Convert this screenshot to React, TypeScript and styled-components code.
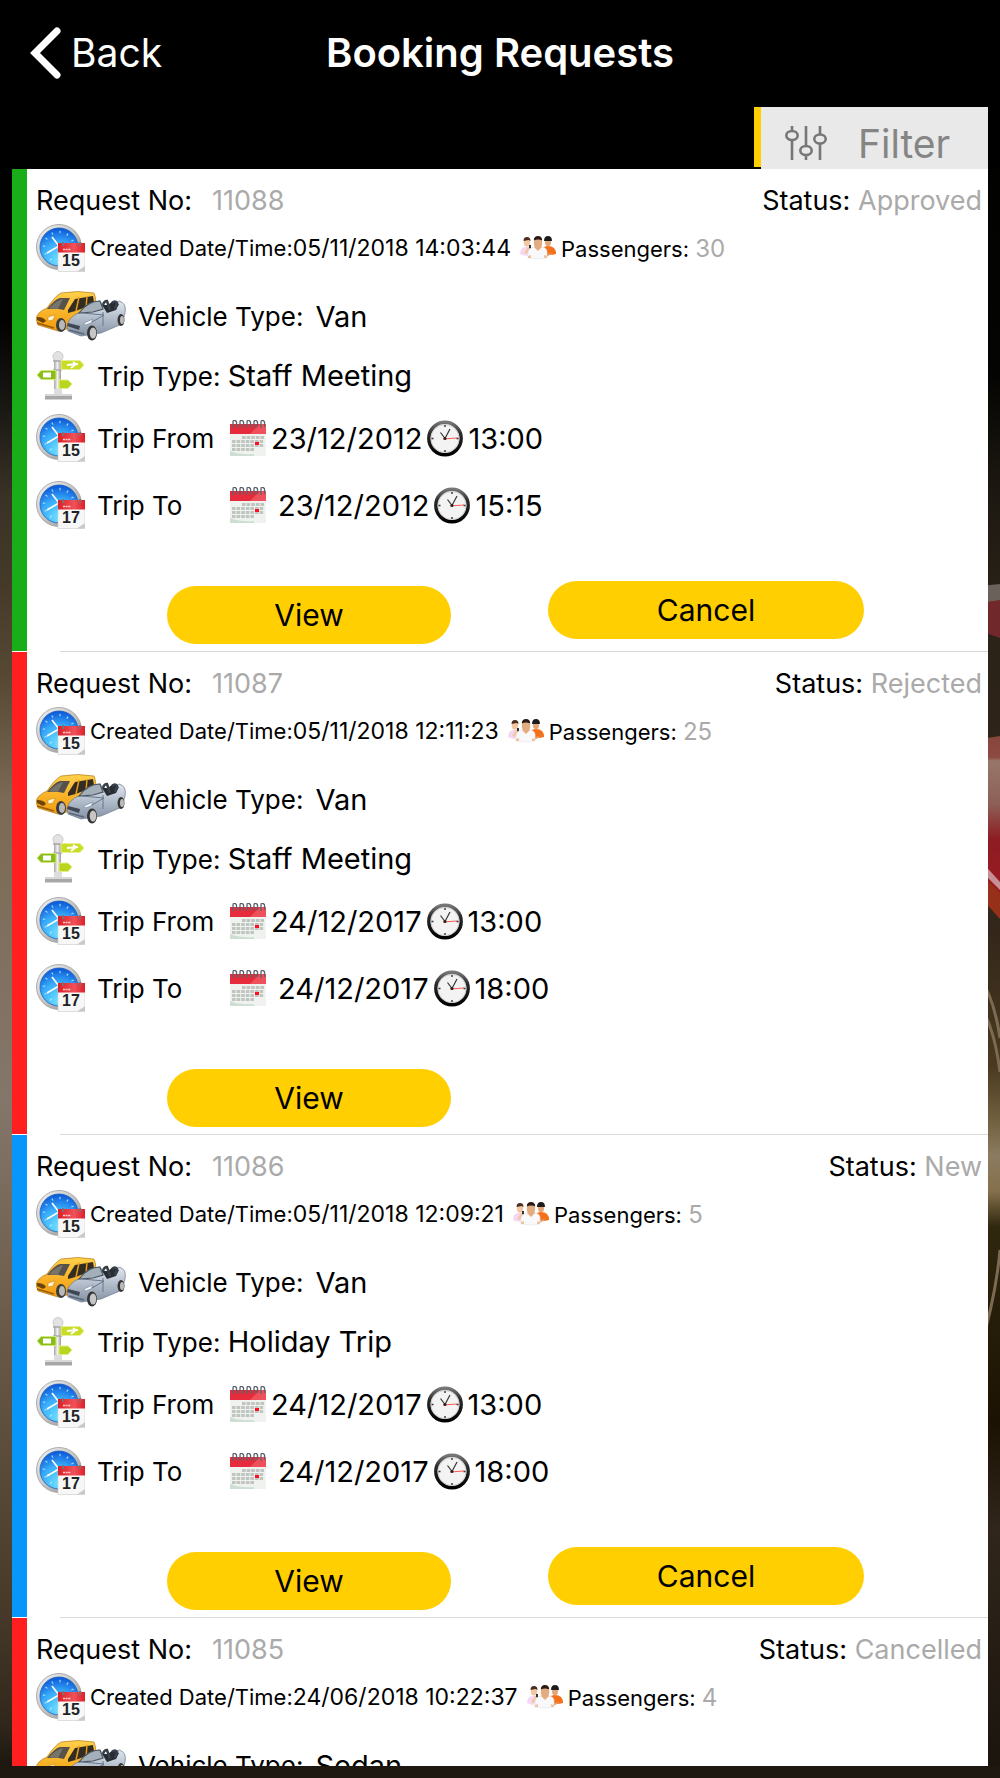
import React from "react";
import styled, { createGlobalStyle } from "styled-components";

const GlobalStyle = createGlobalStyle`
  *, *::before, *::after { box-sizing: border-box; }
  html, body { margin: 0; background: #000; }
  body { font-family: Inter, "Noto Sans", sans-serif; color: #000; }
  button { font: inherit; border: 0; cursor: pointer; }
`;

const Screen = styled.div`
  height: 100vh;
  min-width: 760px;
  display: flex;
  flex-direction: column;
  padding-bottom: 12px;
  position: relative;
  isolation: isolate;
  overflow: hidden;
`;

const Backdrop = styled.svg`
  position: absolute;
  inset: 0;
  width: 100%;
  height: 100%;
  z-index: -1;
`;

const NavBar = styled.header`
  display: grid;
  grid-template-columns: 1fr auto 1fr;
  align-items: center;
  height: 107px;
  flex: none;
  padding: 0 30px 2px;
  color: #fff;
  background: #000;
`;

const BackLink = styled.a`
  display: flex;
  align-items: center;
  gap: 9px;
  color: inherit;
  text-decoration: none;
  font-size: 39px;
`;

const Title = styled.h1`
  margin: 0;
  font-size: 40px;
  font-weight: 600;
`;

const FilterBar = styled.div`
  display: flex;
  justify-content: flex-end;
  flex: none;
  height: 62px;
  padding: 0 12px;
  background: #000;
`;

const FilterAccent = styled.span`
  width: 7px;
  height: 60px;
  background: #ffcf02;
`;

const FilterButton = styled.button`
  display: flex;
  align-items: center;
  gap: 31px;
  width: 227px;
  padding: 10px 24px 0;
  background: #e9e9e9;
  color: #858585;
  && { font-size: 39px; }
`;

const List = styled.main`
  flex: 1;
  min-height: 0;
  margin: 0 12px;
  overflow: hidden auto;
  scrollbar-width: none;
  background: #fff;
`;

const Card = styled.article<{ $accent: string }>`
  display: flex;
  flex-direction: column;
  min-height: 483px;
  padding: 12px 0 0 24px;
  background: linear-gradient(${(p) => p.$accent}, ${(p) => p.$accent}) 0 0 / 15px calc(100% - 1px) no-repeat #fff;
`;

const Row = styled.div<{ $height: number; $gap?: number }>`
  display: flex;
  align-items: center;
  flex: none;
  height: ${(p) => p.$height}px;
  gap: ${(p) => p.$gap ?? 0}px;
  font-size: 26px;
  white-space: nowrap;
`;

const HeadRow = styled(Row)`
  justify-content: space-between;
  padding-right: 6px;
  font-size: 27px;
`;

const VehicleRow = styled(Row)`
  margin-top: 10px;
`;

const Created = styled(Row)`
  font-size: 22px;
`;

const Stamp = styled.span`
  margin-right: 4px;
  font-size: 23px;
`;

const Muted = styled.span<{ $indent?: number; $size?: number }>`
  margin-left: ${(p) => p.$indent ?? 0}px;
  color: #aaa;
  font-size: ${(p) => p.$size ?? 27}px;
`;

const Value = styled.span<{ $indent?: number }>`
  margin-left: ${(p) => p.$indent ?? 0}px;
  font-size: 29px;
`;

const Time = styled.span`
  display: flex;
  align-items: center;
  gap: 5px;
  margin-left: 5px;
  font-size: 29px;
`;

const TripLabel = styled.span`
  width: 133px;
  margin-left: 12px;
`;

const Actions = styled.div`
  display: grid;
  grid-template-columns: 284fr 316fr;
  column-gap: 97px;
  padding: 42px 124px 7px 131px;
  align-items: start;
  height: 112px;
`;

const Pill = styled.button<{ $drop?: number }>`
  height: 58px;
  margin-top: ${(p) => p.$drop ?? 0}px;
  padding: 0;
  border-radius: 29px;
  background: #ffcf02;
  color: #000;
  && { font-size: 30px; }
`;

const Divider = styled.hr`
  width: calc(100% - 24px);
  height: 1px;
  margin: auto 0 0 24px;
  border: 0;
  background: #d9d9d9;
`;

const Icon = styled.svg`
  display: block;
  flex: none;
`;

const HiddenDefs = styled.svg`
  position: absolute;
  width: 0;
  height: 0;
`;

function Defs() {
  return (
    <HiddenDefs aria-hidden="true">
      <defs>
        <radialGradient id="blue" cx="50%" cy="85%" r="85%">
          <stop offset="0" stopColor="#6fe2ff" />
          <stop offset=".55" stopColor="#38acfa" />
          <stop offset="1" stopColor="#0a55d8" />
        </radialGradient>
        <linearGradient id="steel" x1="0" y1="0" x2="1" y2="1">
          <stop offset="0" stopColor="#f6f6f6" />
          <stop offset=".5" stopColor="#c4c4c4" />
          <stop offset="1" stopColor="#8b8b8b" />
        </linearGradient>
        <linearGradient id="post" x1="0" y1="0" x2="1" y2="0">
          <stop offset="0" stopColor="#a7a7a7" />
          <stop offset=".5" stopColor="#f2f2f2" />
          <stop offset="1" stopColor="#9a9a9a" />
        </linearGradient>
        <linearGradient id="red" x1="0" y1="0" x2="1" y2="0">
          <stop offset="0" stopColor="#d92027" />
          <stop offset=".6" stopColor="#f0525a" />
          <stop offset="1" stopColor="#de1f2a" />
        </linearGradient>
        <linearGradient id="taxi" x1="0" y1="0" x2="0" y2="1">
          <stop offset="0" stopColor="#ffd04a" />
          <stop offset="1" stopColor="#f29a0c" />
        </linearGradient>
        <linearGradient id="silver" x1="0" y1="0" x2="0" y2="1">
          <stop offset="0" stopColor="#dfe6ef" />
          <stop offset="1" stopColor="#8492a5" />
        </linearGradient>
        <linearGradient id="rim" x1="0" y1="0" x2="0" y2="1">
          <stop offset="0" stopColor="#777" />
          <stop offset=".35" stopColor="#2a2a2a" />
          <stop offset="1" stopColor="#000" />
        </linearGradient>
      </defs>
    </HiddenDefs>
  );
}

function ClockDateIcon({ day }: { day: number }) {
  return (
    <Icon width="49" height="48" viewBox="0 0 49 48" aria-hidden="true">
      <circle cx="23" cy="23" r="22.5" fill="url(#steel)" stroke="#999" strokeWidth=".8" />
      <circle cx="23" cy="23" r="19" fill="url(#blue)" stroke="#1c5fb8" strokeWidth=".8" />
      <circle cx="23" cy="23" r="15" fill="none" stroke="#c6f0ff" strokeWidth="2.4" strokeDasharray="1.2 6.65" opacity=".8" />
      <path d="M16 13 L23 22 L11 29" fill="none" stroke="#fff" strokeWidth="1.6" />
      <rect x="22" y="20" width="27" height="27.5" fill="#f7f7f7" stroke="#ccc" strokeWidth=".6" />
      <path d="M22 19h27v9.500H22z" fill="url(#red)" />
      <path d="M27 25.500h8" stroke="#ffc9c9" strokeWidth="1.500" strokeDasharray="2 .6" />
      <path d="M27 22v-4M44 22v-4" stroke="#777" strokeWidth="1.800" />
      <path d="M49 42l-8 5.500h8z" fill="#c9c9c9" />
      <text x="35" y="42" textAnchor="middle" fontFamily="Liberation Sans, sans-serif" fontWeight="700" fontSize="16" fill="#222">{day}</text>
    </Icon>
  );
}

function PeopleIcon() {
  return (
    <Icon width="36" height="24" viewBox="0 0 36 24" aria-hidden="true">
      <path d="M0 18q0-6 5-7h4l3 3v5q-8 2-12-1z" fill="#f6d7f2" />
      <ellipse cx="7" cy="6.500" rx="3.200" ry="4.200" fill="#f2c7a2" />
      <path d="M3.500 5q0-4 3.500-4t3.500 4l-2-1-5 1z" fill="#4a2d20" />
      <path d="M4 17l4-6 2 1-3 6z" fill="#f2c7a2" />
      <path d="M9 9l2 0v4l-2-1z" fill="#333" />
      <path d="M22 17v-4q2-3 6-3 8 0 8 8-6 2-13 0z" fill="#f5701b" />
      <ellipse cx="28" cy="6.500" rx="3" ry="3.800" fill="#e3a678" />
      <path d="M24 5q0-5 4-5t4 5z" fill="#1d1d1d" />
      <path d="M24 19l7-2 1 1-6 3z" fill="#e59a66" />
      <path d="M8 22v-4q0-6 6-7h8q6 1 5 7v4q-8 2-19 0z" fill="#f9f9fc" stroke="#e3e3ea" strokeWidth=".6" />
      <path d="M14 11l4 4 4-4-2-2h-4z" fill="#e6ac80" />
      <ellipse cx="18" cy="7" rx="4.200" ry="5.500" fill="#e3ac80" />
      <path d="M13.800 4.500q0-4.500 4.200-4.500t4.200 4.500q-4-2-8.400 0z" fill="#2c1b15" />
      <path d="M8 20l3-1v3H8zM24 19l3 1v2h-3z" fill="#edc3a0" />
    </Icon>
  );
}

function CarsIcon() {
  return (
    <Icon width="90" height="50" viewBox="0 0 90 50" aria-hidden="true">
      <path d="M0 28q1-7 11-11Q19 5 25 2q17-3 33 0 3 6 1 20L40 36l-18 4L2 34z" fill="url(#taxi)" stroke="#a76c0e" strokeWidth=".6" />
      <path d="M11 18q8-10 13-11h10l-6 12q-8-2-17-1z" fill="#56524b" />
      <path d="M13 17q8-8 14-9l-5 10z" fill="#77746c" />
      <path d="M32 19l7-11 18-3 1 6q-9 7-26 11z" fill="#332c22" />
      <path d="M43 6l-3 14M51 5l-1 12" stroke="#e89b18" strokeWidth="1.500" />
      <path d="M1 26q7 0 9 4l-3 2-6-3z" fill="#6b4409" />
      <path d="M12 26l7-2-2 5-5 1z" fill="#fff4d1" stroke="#c98a19" strokeWidth=".6" />
      <path d="M1 32l17 5" stroke="#995d0b" strokeWidth="1.400" />
      <ellipse cx="25" cy="34" rx="5" ry="7" fill="#3c3c3c" /><ellipse cx="26" cy="34" rx="3" ry="5" fill="#b8b8b8" />
      <path d="M31 36q0-9 13-15 9-11 20-11l5 7 14-7q8 2 6 12l-3 11-21 9-20 3-13-5z" fill="url(#silver)" stroke="#6b7889" strokeWidth=".7" />
      <path d="M43 22q9-12 21-12l3 8-10 3z" fill="#a3afb9" stroke="#4c5661" strokeWidth="1.200" />
      <path d="M66 14l5 8 9-3 3-6-6-3-5 4z" fill="#272c33" />
      <path d="M67 14q1-4 4-4l3 9M76 12q3-3 5 0l-2 6" fill="none" stroke="#3a4048" strokeWidth="2.500" />
      <path d="M46 22l22 2-12 7M67 21v14" fill="none" stroke="#67778c" />
      <path d="M32 32l12 3-1 4-12-4z" fill="#3e4753" />
      <path d="M48 32l9-4-2 4-6 2z" fill="#f9fbff" stroke="#718196" strokeWidth=".6" />
      <path d="M33 39l15 4" stroke="#5a6777" strokeWidth="1.400" />
      <ellipse cx="56" cy="42" rx="5" ry="7.500" fill="#343434" /><ellipse cx="57" cy="42" rx="3.300" ry="5.500" fill="#c6c6c6" />
      <ellipse cx="85" cy="29" rx="3.500" ry="6" fill="#343434" /><ellipse cx="86" cy="29" rx="2" ry="4" fill="#bbb" />
    </Icon>
  );
}

function SignpostIcon() {
  return (
    <Icon width="49" height="49" viewBox="0 0 49 49" aria-hidden="true">
      <rect x="18" y="8" width="7" height="36" fill="url(#post)" />
      <circle cx="22" cy="5.500" r="5" fill="#e2e2e2" stroke="#bbb" strokeWidth=".7" />
      <path d="M17 10h10M17 19h9" stroke="#aaa" strokeWidth="1.500" />
      <path d="M25 9.500h19l4 4.500-4 4.500H25z" fill="#c9dd27" stroke="#e6ef96" />
      <path d="M31 14l11-1M35 17l5-4-3-2" fill="none" stroke="#fff" strokeWidth="1.800" />
      <path d="M20 19.500H5L1 24l4 4.500h15z" fill="#8bbd18" stroke="#d5e77c" />
      <rect x="7" y="21.500" width="8" height="5" fill="#fff" />
      <path d="M23 29h9l4 4-4 4.500h-9z" fill="#b9d51d" stroke="#e3ee8b" />
      <path d="M9 43h27v5.500H9z" fill="#a7a7a7" /><path d="M9 43h27v2H9z" fill="#d8d8d8" />
      <path d="M18 38h8v5h-8z" fill="#ddd" />
    </Icon>
  );
}

function CalendarIcon() {
  return (
    <Icon width="36" height="36" viewBox="0 0 36 36" aria-hidden="true">
      <rect x="0" y="5" width="36" height="31" fill="#eff2ef" />
      <path d="M0 4h36v10H0z" fill="#e62c3c" />
      <path d="M20 14L30 4h6v10z" fill="#f36b72" opacity=".6" />
      {[4, 11, 18, 25, 32].map((x) => (
        <path key={x} d={`M${x - 1} 8V2q0-2 2-1.500 2 .5 1.500 3V7`} fill="none" stroke="#59636b" strokeWidth="1.300" />
      ))}
      <path d="M12 17.500h22M2 21.500h32M2 25.500h32M2 29.500h22" stroke="#c0c5c0" strokeWidth="2.800" strokeDasharray="3.600 1" />
      <rect x="25" y="22" width="4" height="3" fill="#ff1020" />
      <path d="M0 31q10 4 24 3v2H0z" fill="#cddfd3" />
    </Icon>
  );
}

function ClockIcon() {
  return (
    <Icon width="36" height="37" viewBox="0 0 36 37" aria-hidden="true">
      <circle cx="18" cy="18.500" r="16.200" fill="#f3f3f3" stroke="url(#rim)" strokeWidth="3.400" />
      <circle cx="18" cy="18.500" r="14" fill="none" stroke="#bbb" strokeWidth=".6" />
      <path d="M18 5v2M18 30v2M4.500 18.500h2M29.500 18.500h2" stroke="#333" strokeWidth="1.400" />
      <path d="M13.500 12.500l4.500 6 5-9.500" fill="none" stroke="#333" strokeWidth="1.200" />
      <path d="M16 19l14-1" stroke="#ff5a50" strokeWidth="1" />
      <circle cx="18" cy="18.500" r="1.500" fill="#222" />
    </Icon>
  );
}

function FilterIcon() {
  return (
    <Icon width="42" height="34" viewBox="0 0 42 34" fill="none" stroke="#777" strokeWidth="2.600" aria-hidden="true">
      <path d="M7 0v5M7 14v20M21 0v20M21 29v5M35 0v8M35 18v16" />
      <ellipse cx="7" cy="9.500" rx="5.700" ry="4.500" />
      <ellipse cx="21" cy="24.500" rx="5.700" ry="4.500" />
      <ellipse cx="35" cy="13" rx="5.700" ry="4.500" />
    </Icon>
  );
}

function Scenery() {
  return (
    <Backdrop viewBox="0 0 1000 1778" preserveAspectRatio="none" aria-hidden="true">
      <defs>
        <linearGradient id="road" x1="0" y1="0" x2="0" y2="1">
          <stop offset="0" stopColor="#000" />
          <stop offset=".18" stopColor="#020201" />
          <stop offset=".23" stopColor="#1a1815" />
          <stop offset=".28" stopColor="#3a3226" />
          <stop offset=".33" stopColor="#453a2a" />
          <stop offset=".38" stopColor="#564834" />
          <stop offset=".45" stopColor="#7b6a55" />
          <stop offset=".62" stopColor="#84766a" />
          <stop offset=".75" stopColor="#695a48" />
          <stop offset=".9" stopColor="#493b2a" />
          <stop offset=".97" stopColor="#30271b" />
          <stop offset="1" stopColor="#17120c" />
        </linearGradient>
        <linearGradient id="body" x1="0" y1="0" x2="0" y2="1">
          <stop offset="0" stopColor="#000" />
          <stop offset=".21" stopColor="#040402" />
          <stop offset=".27" stopColor="#1b1710" />
          <stop offset=".34" stopColor="#2a2218" />
          <stop offset=".52" stopColor="#33261a" />
          <stop offset=".6" stopColor="#4a3a20" />
          <stop offset=".63" stopColor="#71603f" />
          <stop offset=".65" stopColor="#8b7b60" />
          <stop offset=".67" stopColor="#85704c" />
          <stop offset=".69" stopColor="#30270f" />
          <stop offset=".8" stopColor="#1b1203" />
          <stop offset=".86" stopColor="#30261b" />
          <stop offset="1" stopColor="#1a140d" />
        </linearGradient>
        <linearGradient id="bonnet" x1="0" y1="0" x2="0" y2="1">
          <stop offset="0" stopColor="#86463c" />
          <stop offset=".12" stopColor="#8e4a42" />
          <stop offset=".14" stopColor="#977669" />
          <stop offset=".38" stopColor="#8d6058" />
          <stop offset=".58" stopColor="#8d1c22" />
          <stop offset="1" stopColor="#a01a22" />
        </linearGradient>
      </defs>
      <rect width="500" height="1778" fill="url(#road)" />
      <rect x="500" width="500" height="1778" fill="url(#body)" />
      <path d="M980 586l20-2v18l-20 2z" fill="#6a625a" />
      <path d="M980 603l20-3v38l-20-7z" fill="#71282a" />
      <path d="M980 739l20-3v178l-20-22z" fill="url(#bonnet)" />
      <path d="M980 860l20 22v8l-20-20z" fill="#c79096" />
      <path d="M980 873l20 20v26l-20-22z" fill="#963018" />
      <path d="M980 978q14 20 20 60M980 1006q14 20 20 66M1000 1250q-4 45-20 100" fill="none" stroke="#7c6a52" strokeWidth="3" />
      <rect y="1766" width="1000" height="12" fill="#1f1810" />
    </Backdrop>
  );
}

interface Booking {
  no: string;
  status: string;
  accent: string;
  created: string;
  passengers: number;
  vehicle: string;
  trip?: string;
  from?: [string, string];
  to?: [string, string];
  actions: string[];
}

const bookings: Booking[] = [
  { no: "11088", status: "Approved", accent: "#1aad1a", created: "05/11/2018 14:03:44", passengers: 30, vehicle: "Van", trip: "Staff Meeting", from: ["23/12/2012", "13:00"], to: ["23/12/2012", "15:15"], actions: ["View", "Cancel"] },
  { no: "11087", status: "Rejected", accent: "#ff1f1f", created: "05/11/2018 12:11:23", passengers: 25, vehicle: "Van", trip: "Staff Meeting", from: ["24/12/2017", "13:00"], to: ["24/12/2017", "18:00"], actions: ["View"] },
  { no: "11086", status: "New", accent: "#0796fa", created: "05/11/2018 12:09:21", passengers: 5, vehicle: "Van", trip: "Holiday Trip", from: ["24/12/2017", "13:00"], to: ["24/12/2017", "18:00"], actions: ["View", "Cancel"] },
  { no: "11085", status: "Cancelled", accent: "#ff1f1f", created: "24/06/2018 10:22:37", passengers: 4, vehicle: "Sedan", actions: [] },
];

function TripRow({ label, day, when, height, indent }: { label: string; day: number; when: [string, string]; height: number; indent: number }) {
  return (
    <Row $height={height}>
      <ClockDateIcon day={day} />
      <TripLabel>{label}</TripLabel>
      <CalendarIcon />
      <Value $indent={indent}>{when[0]}</Value>
      <Time>
        <ClockIcon />
        {when[1]}
      </Time>
    </Row>
  );
}

function BookingCard({ b }: { b: Booking }) {
  return (
    <Card $accent={b.accent}>
      <HeadRow $height={38}>
        <span>Request No:<Muted $indent={20}>{b.no}</Muted></span>
        <span>Status: <Muted>{b.status}</Muted></span>
      </HeadRow>
      <Created $height={58} $gap={5}>
        <ClockDateIcon day={15} />
        <span>Created Date/Time:<Stamp>{b.created}</Stamp></span>
        <PeopleIcon />
        <span>Passengers: <Muted $size={24}>{b.passengers}</Muted></span>
      </Created>
      <VehicleRow $height={58} $gap={12}>
        <CarsIcon />
        <span>Vehicle Type:</span>
        <Value>{b.vehicle}</Value>
      </VehicleRow>
      {b.trip && (
        <Row $height={60} $gap={12}>
          <SignpostIcon />
          <span>Trip Type: <Value>{b.trip}</Value></span>
        </Row>
      )}
      {b.from && <TripRow label="Trip From" day={15} when={b.from} height={66} indent={5} />}
      {b.to && <TripRow label="Trip To" day={17} when={b.to} height={68} indent={12} />}
      {b.actions.length > 0 && (
        <Actions>
          {b.actions.map((name) => (
            <Pill key={name} type="button" $drop={name === "View" ? 5 : 0}>{name}</Pill>
          ))}
        </Actions>
      )}
      <Divider />
    </Card>
  );
}

export default function App() {
  return (
    <Screen>
      <GlobalStyle />
      <Defs />
      <Scenery />
      <NavBar>
        <BackLink href="#back">
          <Icon width="32" height="52" viewBox="0 0 32 52" aria-hidden="true">
            <path d="M27 4L5 26l22 22" fill="none" stroke="#fff" strokeWidth="7" strokeLinecap="round" />
          </Icon>
          Back
        </BackLink>
        <Title>Booking Requests</Title>
      </NavBar>
      <FilterBar>
        <FilterAccent />
        <FilterButton type="button">
          <FilterIcon />
          Filter
        </FilterButton>
      </FilterBar>
      <List>
        {bookings.map((b) => <BookingCard key={b.no} b={b} />)}
      </List>
    </Screen>
  );
}
